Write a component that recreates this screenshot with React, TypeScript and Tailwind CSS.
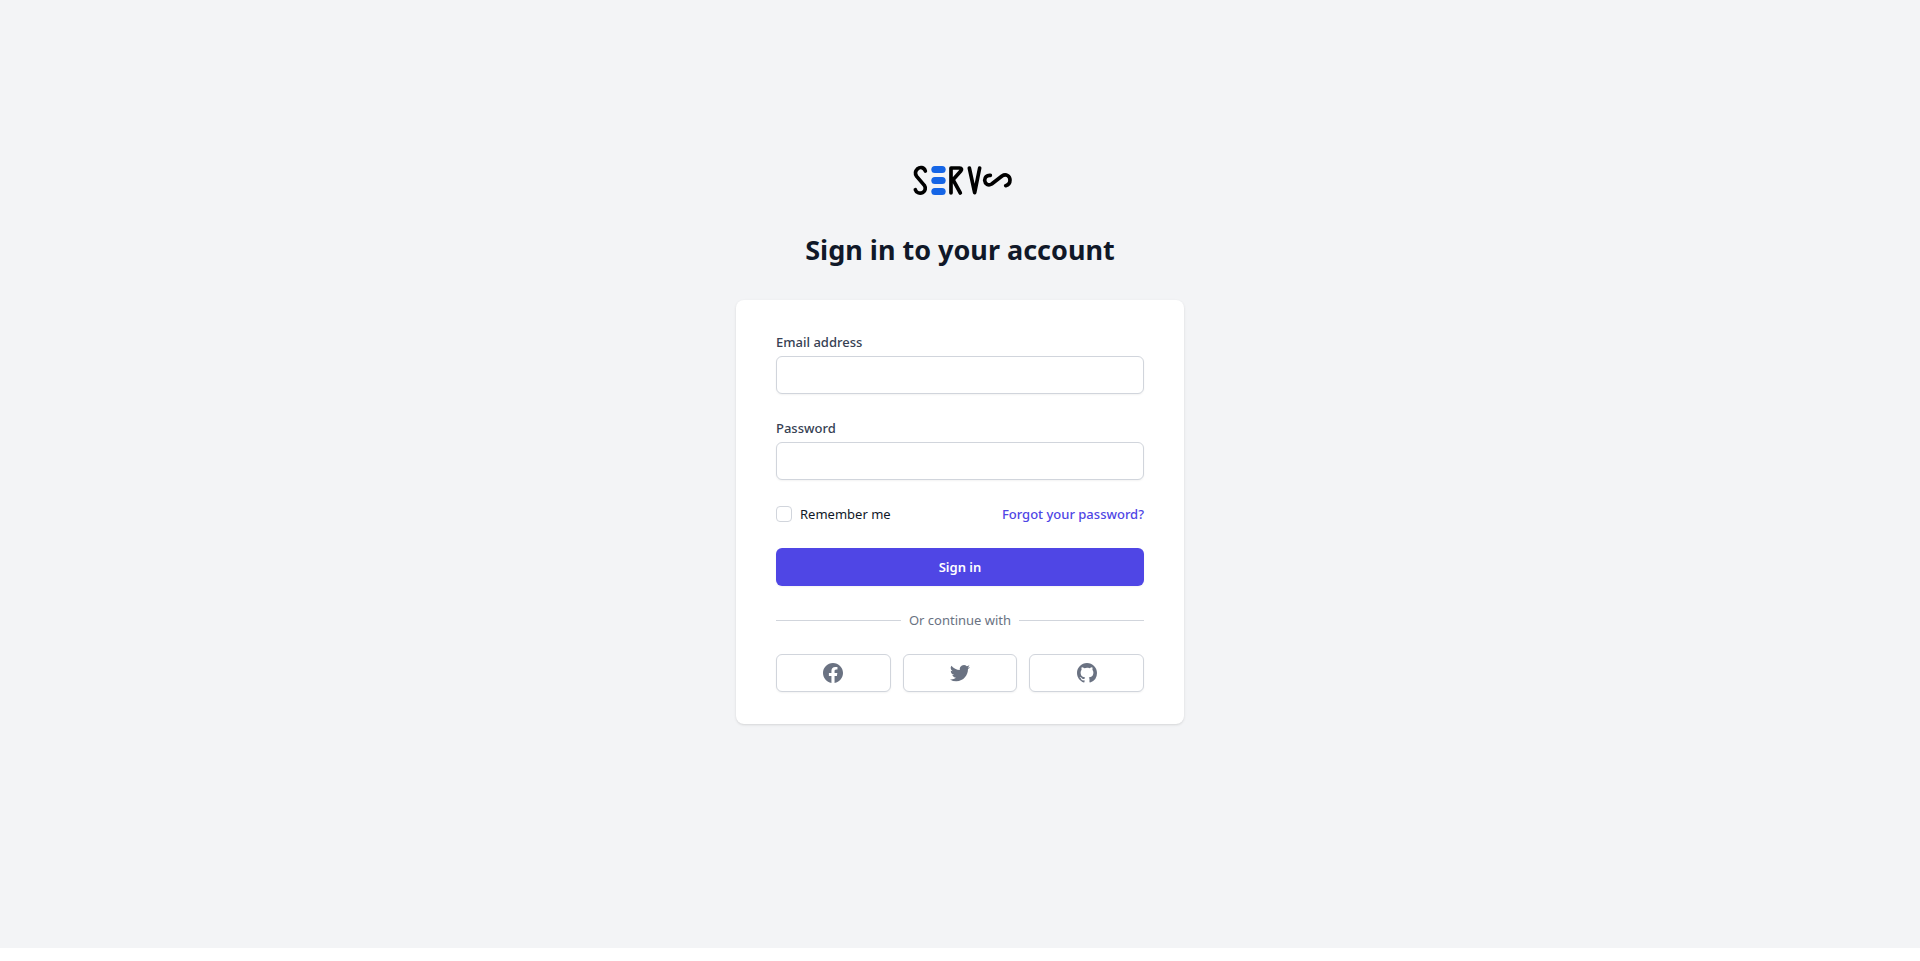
import type { ReactNode } from 'react';

function Logo() {
  return (
    <svg
      className="mx-auto h-12 w-[140px]"
      viewBox="0 30 420 144"
      fill="none"
      stroke="#000"
      strokeWidth="11"
      strokeLinecap="round"
      strokeLinejoin="round"
      role="img"
      aria-label="Servs"
    >
      <path d="M106 63C102 51 90 50 82 57C75 64 75 72 80 79L103 106C108 114 106 123 99 127C90 132 79 129 76 119" />
      <g fill="#1565e6" stroke="none">
        <rect x="124" y="48" width="43" height="21" rx="10.5" />
        <rect x="124" y="81" width="43" height="21" rx="10.5" />
        <rect x="124" y="114" width="43" height="21" rx="10.5" />
      </g>
      <path d="M183 129V54H209C215 54 216 58 213 62L189 89L211 129" />
      <path d="M238 54L254 128L269 54" />
      <path d="M301 76C290 75 284 82 284 91C285 102 295 108 305 102L336 78C348 70 360 78 360 90C360 99 355 105 347 107" />
    </svg>
  );
}

type FieldProps = { id: string; type: string; label: string; autoComplete: string };

function Field({ id, type, label, autoComplete }: FieldProps) {
  return (
    <div>
      <label htmlFor={id} className="block text-[13px] leading-5 font-medium text-gray-700">
        {label}
      </label>
      <input
        id={id}
        name={id}
        type={type}
        autoComplete={autoComplete}
        required
        className="mt-1 block h-[38px] w-full rounded-md border border-gray-300 bg-white px-3 text-sm shadow-xs outline-none focus:border-[#4f46e5]"
      />
    </div>
  );
}

function SocialLink({ label, children }: { label: string; children: ReactNode }) {
  return (
    <a
      href="#"
      aria-label={label}
      className="flex justify-center rounded-md border border-gray-300 bg-white px-4 py-2 text-gray-500 shadow-xs hover:bg-gray-50"
    >
      <svg className="size-5" viewBox="0 0 20 20" fill="currentColor" aria-hidden="true">
        {children}
      </svg>
    </a>
  );
}

export default function App() {
  return (
    <main className="min-h-[calc(100vh-13px)] bg-gray-100 pt-40 pb-12 font-['Noto_Sans','Open_Sans',sans-serif]">
      <div className="mx-auto w-full max-w-md">
        <Logo />
        <h1 className="mt-6 text-center text-[27px] leading-9 font-bold text-gray-900">
          Sign in to your account
        </h1>
        <div className="mt-8 rounded-lg bg-white px-10 py-8 shadow-sm">
          <form className="space-y-6" onSubmit={(event) => event.preventDefault()}>
            <Field id="email" type="email" label="Email address" autoComplete="email" />
            <Field id="password" type="password" label="Password" autoComplete="current-password" />

            <div className="flex items-center justify-between text-[13px] leading-5">
              <div className="flex items-center gap-2">
                <input
                  id="remember"
                  name="remember"
                  type="checkbox"
                  className="size-4 appearance-none rounded-sm border border-gray-300 bg-white checked:border-[#4f46e5] checked:bg-[#4f46e5]"
                />
                <label htmlFor="remember" className="text-gray-900">
                  Remember me
                </label>
              </div>
              <a href="#" className="font-medium text-[#4f46e5] hover:text-indigo-500">
                Forgot your password?
              </a>
            </div>

            <button
              type="submit"
              className="flex h-[38px] w-full items-center justify-center rounded-md bg-[#4f46e5] text-[13px] leading-5 font-semibold text-white shadow-xs hover:bg-indigo-700"
            >
              Sign in
            </button>
          </form>

          <div className="mt-6 flex items-center gap-2 text-[13px] leading-5 text-gray-500">
            <span className="h-px flex-1 bg-gray-300" />
            <span>Or continue with</span>
            <span className="h-px flex-1 bg-gray-300" />
          </div>

          <div className="mt-6 grid grid-cols-3 gap-3">
            <SocialLink label="Sign in with Facebook">
              <path
                fillRule="evenodd"
                clipRule="evenodd"
                d="M20 10c0-5.523-4.477-10-10-10S0 4.477 0 10c0 4.991 3.657 9.128 8.438 9.878v-6.987h-2.54V10h2.54V7.797c0-2.506 1.492-3.89 3.777-3.89 1.094 0 2.238.195 2.238.195v2.46h-1.26c-1.243 0-1.63.771-1.63 1.562V10h2.773l-.443 2.89h-2.33v6.988C16.343 19.128 20 14.991 20 10z"
              />
            </SocialLink>
            <SocialLink label="Sign in with Twitter">
              <path d="M6.29 18.251c7.547 0 11.675-6.253 11.675-11.675 0-.178 0-.355-.012-.53A8.348 8.348 0 0020 3.92a8.19 8.19 0 01-2.357.646 4.118 4.118 0 001.804-2.27 8.224 8.224 0 01-2.605.996 4.107 4.107 0 00-6.993 3.743 11.65 11.65 0 01-8.457-4.287 4.106 4.106 0 001.27 5.477A4.073 4.073 0 01.8 7.713v.052a4.105 4.105 0 003.292 4.022 4.095 4.095 0 01-1.853.07 4.108 4.108 0 003.834 2.85A8.233 8.233 0 010 16.407a11.616 11.616 0 006.29 1.84" />
            </SocialLink>
            <SocialLink label="Sign in with GitHub">
              <path
                fillRule="evenodd"
                clipRule="evenodd"
                d="M10 0C4.477 0 0 4.484 0 10.017c0 4.425 2.865 8.18 6.839 9.504.5.092.682-.217.682-.483 0-.237-.008-.868-.013-1.703-2.782.605-3.369-1.343-3.369-1.343-.454-1.158-1.11-1.466-1.11-1.466-.908-.62.069-.608.069-.608 1.003.07 1.531 1.032 1.531 1.032.892 1.53 2.341 1.088 2.91.832.092-.647.35-1.088.636-1.338-2.22-.253-4.555-1.113-4.555-4.951 0-1.093.39-1.988 1.029-2.688-.103-.253-.446-1.272.098-2.65 0 0 .84-.27 2.75 1.026A9.564 9.564 0 0110 4.844c.85.004 1.705.115 2.504.337 1.909-1.296 2.747-1.027 2.747-1.027.546 1.379.203 2.398.1 2.651.64.7 1.028 1.595 1.028 2.688 0 3.848-2.339 4.695-4.566 4.942.359.31.678.921.678 1.856 0 1.338-.012 2.419-.012 2.747 0 .268.18.58.688.482A10.019 10.019 0 0020 10.017C20 4.484 15.522 0 10 0z"
              />
            </SocialLink>
          </div>
        </div>
      </div>
    </main>
  );
}
